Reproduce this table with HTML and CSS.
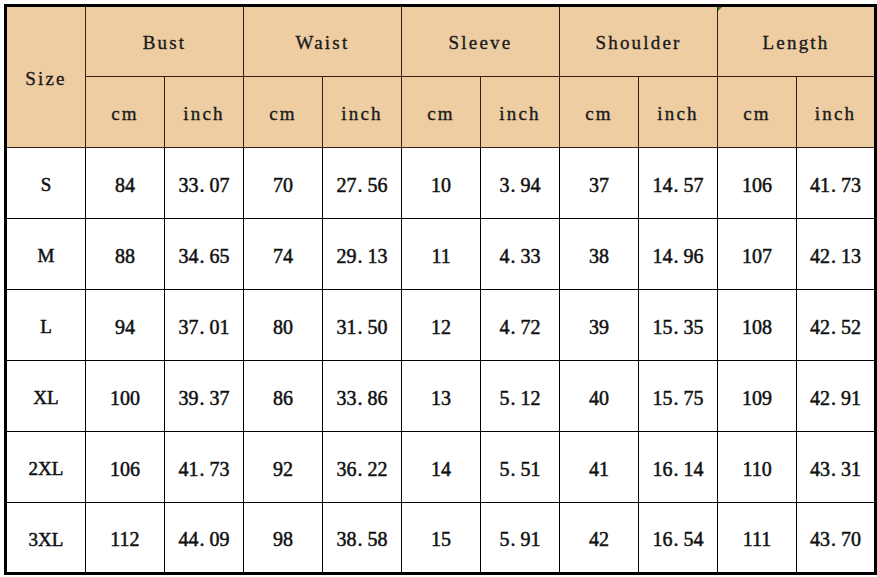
FILE: index.html
```html
<!DOCTYPE html>
<html lang="en">
<head>
<meta charset="utf-8">
<title>Size Chart</title>
<link rel="stylesheet" href="styles.css">
</head>
<body>
<table class="chart">
  <colgroup>
    <col class="c-size">
    <col span="10" class="c-val">
  </colgroup>
  <thead>
    <tr>
      <th rowspan="2">Size</th>
      <th colspan="2">Bust</th>
      <th colspan="2">Waist</th>
      <th colspan="2">Sleeve</th>
      <th colspan="2">Shoulder</th>
      <th colspan="2" class="marked">Length</th>
    </tr>
    <tr>
      <th>cm</th><th>inch</th>
      <th>cm</th><th>inch</th>
      <th>cm</th><th>inch</th>
      <th>cm</th><th>inch</th>
      <th>cm</th><th>inch</th>
    </tr>
  </thead>
  <tbody>
    <tr><td>S</td><td>84</td><td>33<span class="dot">.</span>07</td><td>70</td><td>27<span class="dot">.</span>56</td><td>10</td><td>3<span class="dot">.</span>94</td><td>37</td><td>14<span class="dot">.</span>57</td><td>106</td><td>41<span class="dot">.</span>73</td></tr>
    <tr><td>M</td><td>88</td><td>34<span class="dot">.</span>65</td><td>74</td><td>29<span class="dot">.</span>13</td><td>11</td><td>4<span class="dot">.</span>33</td><td>38</td><td>14<span class="dot">.</span>96</td><td>107</td><td>42<span class="dot">.</span>13</td></tr>
    <tr><td>L</td><td>94</td><td>37<span class="dot">.</span>01</td><td>80</td><td>31<span class="dot">.</span>50</td><td>12</td><td>4<span class="dot">.</span>72</td><td>39</td><td>15<span class="dot">.</span>35</td><td>108</td><td>42<span class="dot">.</span>52</td></tr>
    <tr><td>XL</td><td>100</td><td>39<span class="dot">.</span>37</td><td>86</td><td>33<span class="dot">.</span>86</td><td>13</td><td>5<span class="dot">.</span>12</td><td>40</td><td>15<span class="dot">.</span>75</td><td>109</td><td>42<span class="dot">.</span>91</td></tr>
    <tr><td>2XL</td><td>106</td><td>41<span class="dot">.</span>73</td><td>92</td><td>36<span class="dot">.</span>22</td><td>14</td><td>5<span class="dot">.</span>51</td><td>41</td><td>16<span class="dot">.</span>14</td><td>110</td><td>43<span class="dot">.</span>31</td></tr>
    <tr><td>3XL</td><td>112</td><td>44<span class="dot">.</span>09</td><td>98</td><td>38<span class="dot">.</span>58</td><td>15</td><td>5<span class="dot">.</span>91</td><td>42</td><td>16<span class="dot">.</span>54</td><td>111</td><td>43<span class="dot">.</span>70</td></tr>
  </tbody>
</table>
</body>
</html>
```

FILE: styles.css
```css
html, body {
  margin: 0;
  padding: 0;
  background: #ffffff;
}

body {
  padding: 4px 0 0 4px;
}

.chart {
  border-collapse: collapse;
  table-layout: fixed;
  width: 871px;
  border: 3px solid #000;
}

.c-size { width: 80px; }
.c-val { width: 79px; }

.chart tr {
  height: 71px;
}

.chart th {
  background: #eecda2;
  border: 1px solid #3a1a12;
  padding: 3px 0 0 0;
  font-family: "Liberation Serif", "Times New Roman", serif;
  font-weight: normal;
  font-size: 19px;
  letter-spacing: 2.2px;
  color: #1a1a1a;
  -webkit-text-stroke: 0.35px #1a1a1a;
  text-align: center;
  vertical-align: middle;
}

.chart td {
  border: 1px solid #000;
  padding: 4px 0 0 0;
  font-family: "Liberation Serif", "Times New Roman", serif;
  font-weight: normal;
  font-size: 20px;
  color: #111;
  -webkit-text-stroke: 0.5px #111;
  text-align: center;
  vertical-align: middle;
}

.chart tbody td:first-child {
  font-size: 19px;
}

.dot {
  display: inline-block;
  width: 10px;
  text-align: left;
  padding-left: 1px;
}

.marked {
  position: relative;
}

.marked::before {
  content: "";
  position: absolute;
  left: 0;
  top: 0;
  border-top: 4px solid #2f7d1e;
  border-right: 4px solid transparent;
}
```
